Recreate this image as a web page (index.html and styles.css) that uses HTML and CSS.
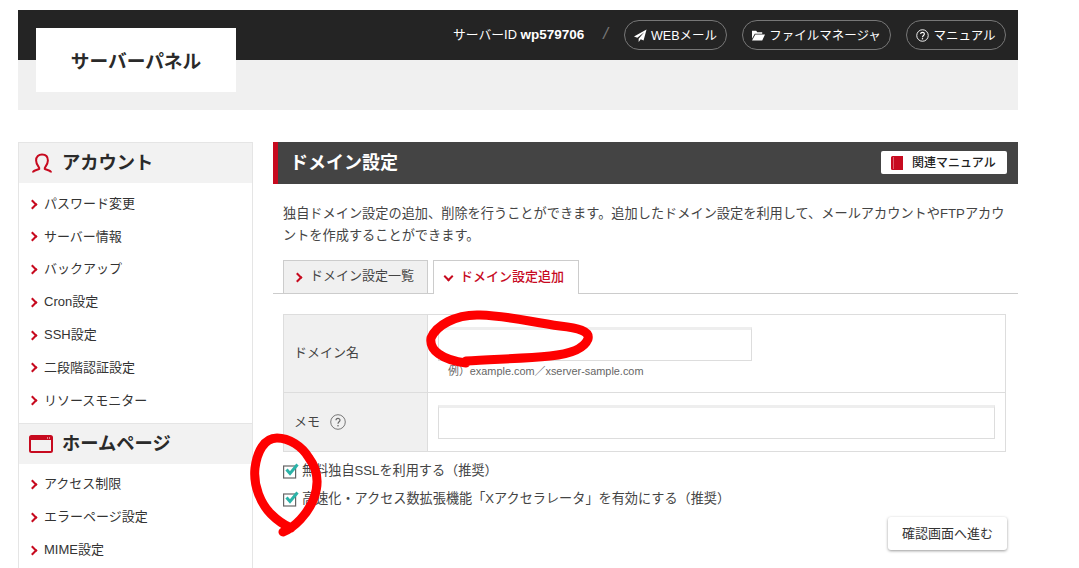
FILE: index.html
```html
<!DOCTYPE html>
<html lang="ja">
<head>
<meta charset="utf-8">
<title>サーバーパネル</title>
<link rel="stylesheet" href="styles.css">
</head>
<body>
<div class="page">
  <header class="header">
    <div class="topbar">
      <span class="server-id">サーバーID <b>wp579706</b></span>
      <span class="slash">/</span>
      <a class="pill pill-mail">
        <svg class="pill-icon" viewBox="0 0 14 14"><path fill="#fff" d="M13.500.5 0 8l3.600 1.500L11 3.500 5 10.400V14l2.300-2.900 3 1.300z"/></svg>WEBメール</a>
      <a class="pill pill-file">
        <svg class="pill-icon" viewBox="0 0 14 12"><path fill="#fff" d="M0 1h4.500l1.200 1.500H11V4.200H3L0 9.500zM3.600 5H14l-3 6.500H0z"/></svg>ファイルマネージャ</a>
      <a class="pill pill-help">
        <svg class="pill-icon" viewBox="0 0 14 14"><circle cx="7" cy="7" r="6.200" fill="none" stroke="#fff"/><path fill="none" stroke="#fff" stroke-width="1.200" d="M5 5.500C5 3 9 3 9 5.400 9 7 7 7 7 8.800"/><circle cx="7" cy="10.600" r=".8" fill="#fff"/></svg>マニュアル</a>
    </div>
    <div class="subbar"></div>
    <div class="logo">サーバーパネル</div>
  </header>

  <div class="columns">
    <aside class="sidebar">
      <h2 class="side-head">
        <svg class="side-icon" viewBox="0 0 20 20"><path fill="none" stroke="#c70a1f" stroke-width="2" d="M1 19.500c0-2.600 4.600-2.600 6.300-3.600.6-1.600-3.200-3.800-3.200-8.400C4.100 3.500 6.700 1.500 10 1.500s5.900 2 5.900 6c0 4.600-3.800 6.800-3.200 8.400 1.700 1 6.300 1 6.300 3.600"/></svg>
        アカウント</h2>
      <ul class="side-list side-list-first">
        <li>パスワード変更</li>
        <li>サーバー情報</li>
        <li>バックアップ</li>
        <li>Cron設定</li>
        <li>SSH設定</li>
        <li>二段階認証設定</li>
        <li>リソースモニター</li>
      </ul>
      <h2 class="side-head side-head-home">
        <svg class="side-icon-win" viewBox="0 0 24 18"><rect x="1" y="1" width="22" height="16" rx="1.500" fill="none" stroke="#c70a1f" stroke-width="2"/><rect x="1" y="1" width="22" height="4" fill="#c70a1f"/><path stroke="#fff" d="M18 3h1M20 3h1"/></svg>
        ホームページ</h2>
      <ul class="side-list">
        <li>アクセス制限</li>
        <li>エラーページ設定</li>
        <li>MIME設定</li>
      </ul>
    </aside>

    <main class="content">
      <div class="title-bar">
        <h1 class="title">ドメイン設定</h1>
        <a class="manual-btn">
          <svg class="book" viewBox="0 0 12 14"><path fill="#c70a1f" d="M1.500 0H12v14H1.500A1.500 1.500 0 0 1 0 12.500V1.500A1.500 1.500 0 0 1 1.500 0z"/><path fill="#e8808c" d="M2 1h.7v12H2z"/></svg>関連マニュアル</a>
      </div>
      <p class="lead">独自ドメイン設定の追加、削除を行うことができます。追加したドメイン設定を利用して、メールアカウントやFTPアカウ<br>ントを作成することができます。</p>

      <div class="tabs">
        <a class="tab">ドメイン設定一覧</a>
        <a class="tab tab-active">ドメイン設定追加</a>
      </div>

      <div class="form-table">
        <div class="row row-domain">
          <div class="label">ドメイン名</div>
          <div class="field">
            <div class="input input-short"></div>
            <div class="hint">例）example.com／xserver-sample.com</div>
          </div>
        </div>
        <div class="row row-memo">
          <div class="label">メモ
            <svg class="help" viewBox="0 0 16 16"><circle cx="8" cy="8" r="7.300" fill="none" stroke="#777"/><path fill="none" stroke="#666" stroke-width="1.200" d="M6 6.300C6 3.800 10 3.800 10 6.200 10 7.800 8 7.800 8 9.700"/><circle cx="8" cy="11.700" r=".8" fill="#666"/></svg>
          </div>
          <div class="field field-memo">
            <div class="input input-long"></div>
          </div>
        </div>
      </div>

      <div class="checks">
        <div class="check">
          <svg class="check-box" viewBox="0 0 16 16"><rect x=".6" y="3" width="12" height="12" fill="#fff" stroke="#666" stroke-width="1.200"/><path fill="none" stroke="#2bb3a8" stroke-width="3" d="M3.500 6.500 7 10.500 14.500 1.500"/></svg>
          <span class="check-text">無料独自SSLを利用する（推奨）</span></div>
        <div class="check">
          <svg class="check-box" viewBox="0 0 16 16"><rect x=".6" y="3" width="12" height="12" fill="#fff" stroke="#666" stroke-width="1.200"/><path fill="none" stroke="#2bb3a8" stroke-width="3" d="M3.500 6.500 7 10.500 14.500 1.500"/></svg>
          <span class="check-text">高速化・アクセス数拡張機能「Xアクセラレータ」を有効にする（推奨）</span></div>
      </div>

      <div class="actions"><a class="submit">確認画面へ進む</a></div>
    </main>
  </div>
</div>

<svg class="scribble" viewBox="0 0 1079 568" aria-hidden="true">
  <path d="M466 361C490 359 520 359 550 356C570 354 584 349 588 339C590 331 578 328 560 326C530 322 510 316 480 315C455 314 436 326 431 338C429 350 442 360 466 363"/>
  <path d="M283 532C294 528 308 514 314 498C319 484 318 470 309 458C302 446 289 438 277 438C264 438 257 452 255 468C253 486 261 504 271 514C278 521 284 525 291 528"/>
</svg>
</body>
</html>
```
FILE: styles.css
```css
* { box-sizing: border-box; }
html, body { height: 100%; }
body {
  margin: 0;
  overflow: hidden;
  background: #fff;
  color: #333;
  font-family: "Liberation Sans", "Noto Sans CJK JP", sans-serif;
  font-size: 13px;
}
h1, h2, p, ul { margin: 0; padding: 0; }
ul { list-style: none; }

.page { width: 1000px; padding-top: 10px; margin-left: 18px; }

.header { position: relative; height: 100px; }
.topbar {
  height: 50px;
  background: #242424;
  color: #fff;
  display: flex;
  align-items: center;
  justify-content: flex-end;
  padding-right: 12px;
  gap: 15px;
}
.subbar { height: 50px; background: #f0f0f0; }
.logo {
  position: absolute;
  left: 18px;
  top: 18px;
  width: 200px;
  height: 64px;
  padding-bottom: 2px;
  background: #fff;
  display: flex;
  align-items: center;
  justify-content: center;
  font-size: 18.700px;
  font-weight: 700;
  color: #2a2a2a;
}
.server-id { font-size: 12.800px; margin-right: 4px; padding-bottom: 3px; }
.server-id b { font-size: 13.500px; }
.slash { color: #777; font-size: 17px; margin-right: 1px; padding-bottom: 3px; font-style: italic; }
.pill {
  height: 30px;
  border: 1px solid #777;
  border-radius: 15px;
  display: flex;
  align-items: center;
  justify-content: center;
  gap: 4px;
  padding-bottom: 2px;
  font-size: 12.500px;
}
.pill-mail { width: 103px; }
.pill-file { width: 149px; }
.pill-help { width: 100px; }
.pill-icon { width: 13px; height: 13px; flex: none; margin-top: 2px; }

.columns { display: flex; gap: 20px; margin-top: 32px; align-items: flex-start; }

.sidebar {
  width: 235px;
  height: 426px;
  flex: none;
  border: 1px solid #e5e5e5;
  border-bottom: 0;
}
.side-head {
  height: 40px;
  background: #f2f2f2;
  display: flex;
  align-items: center;
  gap: 10px;
  padding: 0 0 4px 13px;
  font-size: 18.300px;
  font-weight: 700;
  color: #2a2a2a;
}
.side-head-home {
  height: 41px;
  border-top: 1px solid #e5e5e5;
  padding-left: 10px;
  gap: 9px;
}
.side-icon { width: 20px; height: 20px; flex: none; margin-top: 4px; }
.side-icon-win { width: 24px; height: 18px; flex: none; margin-top: 4px; }
.side-list { padding: 4px 0 7px; }
.side-list-first { padding-bottom: 6px; }
.side-list li {
  height: 32.800px;
  display: flex;
  align-items: center;
  padding: 0 0 2px 25px;
  position: relative;
  font-size: 13px;
}
.side-list li::before {
  content: "";
  position: absolute;
  left: 10px;
  top: 13.500px;
  width: 5px;
  height: 5px;
  border-top: 2px solid #c70a1f;
  border-right: 2px solid #c70a1f;
  transform: rotate(45deg);
}

.content { width: 745px; flex: none; }
.title-bar {
  height: 42px;
  background: #444;
  border-left: 5px solid #c70a1f;
  display: flex;
  align-items: center;
  justify-content: space-between;
  padding: 0 11px 0 12px;
}
.title { font-size: 18px; font-weight: 700; color: #fff; padding-bottom: 4px; }
.manual-btn {
  width: 126px;
  height: 23px;
  margin-top: -1px;
  background: #fff;
  border-radius: 2px;
  display: flex;
  align-items: center;
  padding: 0 0 3px 10px;
  gap: 9px;
  font-size: 12px;
  font-weight: 500;
  color: #222;
}
.book { width: 12px; height: 14px; flex: none; margin-top: 3px; }
.lead {
  margin: 19px 0 0 10px;
  line-height: 22px;
  font-size: 13.200px;
  white-space: nowrap;
  color: #444;
}

.tabs {
  margin-top: 13px;
  height: 34px;
  display: flex;
  gap: 5px;
  padding-left: 10px;
  border-bottom: 1px solid #ccc;
}
.tab {
  width: 145px;
  height: 33px;
  border: 1px solid #ccc;
  border-bottom: 0;
  background: #f0f0f0;
  display: flex;
  align-items: center;
  padding: 0 0 5px 26px;
  position: relative;
  color: #444;
  font-size: 13px;
}
.tab::before {
  content: "";
  position: absolute;
  left: 10px;
  top: 13px;
  width: 5px;
  height: 5px;
  border-top: 2px solid #c70a1f;
  border-right: 2px solid #c70a1f;
  transform: rotate(45deg);
}
.tab-active {
  width: 146px;
  height: 34px;
  background: #fff;
  color: #c70a1f;
  font-weight: 500;
}
.tab-active::before { left: 11px; top: 12px; transform: rotate(135deg); }

.form-table {
  margin: 20px 0 0 10px;
  width: 723px;
  border: 1px solid #ddd;
}
.row { display: flex; }
.row-domain { height: 78px; border-bottom: 1px solid #ddd; }
.row-memo { height: 58px; }
.label {
  width: 144px;
  flex: none;
  background: #f0f0f0;
  border-right: 1px solid #ddd;
  padding: 0 0 4px 10px;
  display: flex;
  align-items: center;
  gap: 10px;
  font-size: 13px;
  color: #444;
}
.help { width: 16px; height: 16px; flex: none; margin-top: 4px; }
.field { padding: 12px 10px 0; }
.field-memo { flex: 1; }
.input {
  height: 34px;
  border: 1px solid #ddd;
  border-top: 3px solid #eee;
  background: #fff;
}
.input-short { width: 314px; }
.input-long { width: 557px; }
.hint {
  margin: 4px 0 0 10px;
  font-size: 10.900px;
  line-height: 12px;
  color: #666;
}

.checks { margin-top: 5px; padding-left: 10px; }
.check {
  height: 28px;
  display: flex;
  align-items: center;
  gap: 3px;
  font-size: 13.150px;
  color: #444;
}
.check-text { padding-bottom: 3px; }
.check-box { width: 16px; height: 16px; flex: none; }

.actions { display: flex; justify-content: flex-end; padding-right: 11px; margin-top: 4px; }
.submit {
  width: 119px;
  height: 33px;
  padding-bottom: 3px;
  background: #fff;
  border-radius: 3px;
  box-shadow: 0 1px 3px rgba(0, 0, 0, .4);
  display: flex;
  align-items: center;
  justify-content: center;
  font-size: 13px;
  color: #333;
}

.scribble {
  position: absolute;
  left: 0;
  top: 0;
  width: 1079px;
  height: 568px;
  pointer-events: none;
}
.scribble path {
  fill: none;
  stroke: #fe0000;
  stroke-width: 9;
  stroke-linecap: round;
  stroke-linejoin: round;
}
```
